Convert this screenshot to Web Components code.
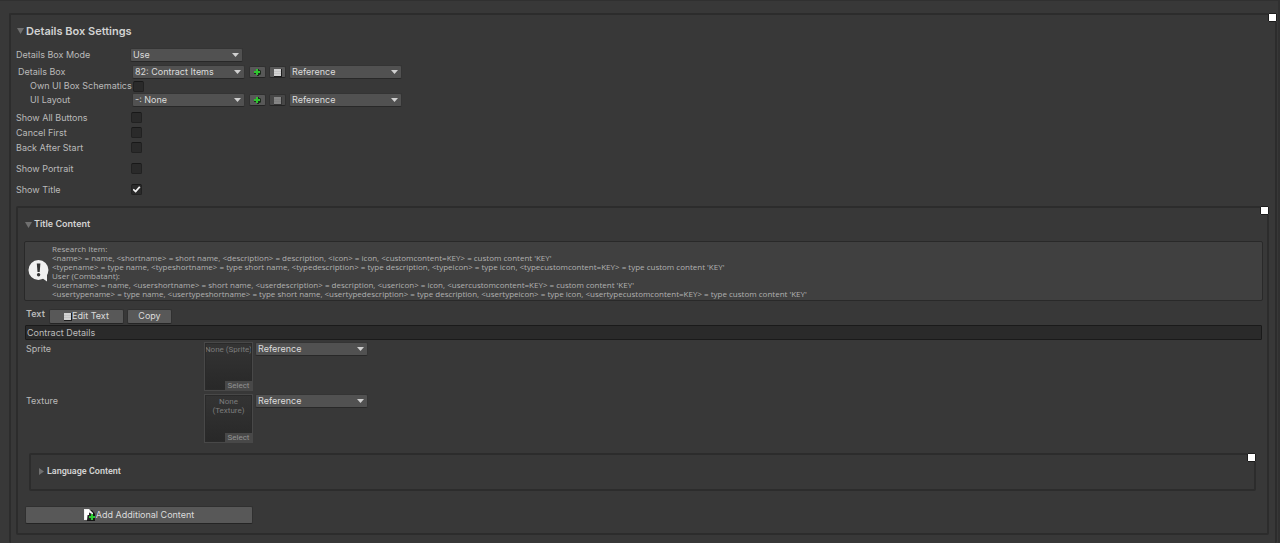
<!DOCTYPE html>
<html lang="en">
<head>
<meta charset="utf-8">
<title>Details Box Settings</title>
<style>
  html { background: #383838; }
  body { margin: 0; font: 9px/14px Inter, "Liberation Sans", sans-serif; color: #bababa; --compact: Roboto, sans-serif; --help: "Open Sans", "Noto Sans", sans-serif; }
</style>
</head>
<body>
<settings-page>
  <fold-panel heading="Details Box Settings" size="large" open>
    <settings-group>
      <select-row label="Details Box Mode" value="Use"></select-row>
    </settings-group>
    <settings-group nested>
      <select-row label="Details Box" value="82: Contract Items" asset></select-row>
      <toggle-row label="Own UI Box Schematics" indent></toggle-row>
      <select-row label="UI Layout" value="-: None" asset indent empty></select-row>
    </settings-group>
    <settings-group>
      <toggle-row label="Show All Buttons"></toggle-row>
      <toggle-row label="Cancel First"></toggle-row>
      <toggle-row label="Back After Start"></toggle-row>
    </settings-group>
    <settings-group spaced><toggle-row label="Show Portrait"></toggle-row></settings-group>
    <settings-group spaced><toggle-row label="Show Title" checked></toggle-row></settings-group>
    <fold-panel class="title" heading="Title Content" size="medium" open>
      <help-box>
        <div>Research Item:</div>
        <div>&lt;name&gt; = name, &lt;shortname&gt; = short name, &lt;description&gt; = description, &lt;icon&gt; = icon, &lt;customcontent=KEY&gt; = custom content 'KEY'</div>
        <div>&lt;typename&gt; = type name, &lt;typeshortname&gt; = type short name, &lt;typedescription&gt; = type description, &lt;typeicon&gt; = type icon, &lt;typecustomcontent=KEY&gt; = type custom content 'KEY'</div>
        <div>User (Combatant):</div>
        <div>&lt;username&gt; = name, &lt;usershortname&gt; = short name, &lt;userdescription&gt; = description, &lt;usericon&gt; = icon, &lt;usercustomcontent=KEY&gt; = custom content 'KEY'</div>
        <div>&lt;usertypename&gt; = type name, &lt;usertypeshortname&gt; = type short name, &lt;usertypedescription&gt; = type description, &lt;usertypeicon&gt; = type icon, &lt;usertypecustomcontent=KEY&gt; = type custom content 'KEY'</div>
      </help-box>
      <text-field label="Text" value="Contract Details"></text-field>
      <object-field label="Sprite" empty="None (Sprite)"></object-field>
      <object-field label="Texture" empty="None (Texture)"></object-field>
      <fold-panel class="language" heading="Language Content" size="small"></fold-panel>
      <add-button>Add Additional Content</add-button>
    </fold-panel>
  </fold-panel>
</settings-page>

<script>
const base = `
  *, *::before, *::after { box-sizing: border-box; }
  button, input, select { font: inherit; color: inherit; margin: 0; }
  button {
    display: flex; align-items: center; justify-content: center; padding: 0;
    background: #585858; border: 1px solid #303030; border-bottom-color: #242424; border-radius: 2px;
    color: #dcdcdc; white-space: nowrap;
  }
  svg { display: block; flex: none; }
`;

const selectCss = `
  .select { position: relative; width: 113px; height: 14px; flex: none; }
  .select select {
    appearance: none; display: block; width: 100%; height: 100%; padding: 0 14px 0 2px;
    background: #515151; border: 1px solid #343434; border-bottom-color: #282828; border-radius: 2px;
    color: #dcdcdc; line-height: 12px;
  }
  .select svg { position: absolute; right: 4px; top: 5px; pointer-events: none; }
`;
const selectHtml = (id, name, value) => `
  <div class="select">
    <select id="${id}" aria-label="${name}"><option>${value}</option></select>
    <svg width="7" height="4" viewBox="0 0 7 4"><path d="M0 0h7L3.5 4z" fill="#d0d0d0"/></svg>
  </div>`;

const checkCss = `
  input[type=checkbox] {
    appearance: none; width: 11px; height: 11px; flex: none; border-radius: 2px;
    background: #2a2a2a; border: 1px solid #212121; border-top-color: #181818;
    display: grid; place-items: center;
  }
  input:checked::before {
    content: ""; width: 8px; height: 7px; background: #f2f2f2;
    clip-path: polygon(0 55%, 16% 38%, 38% 62%, 82% 4%, 100% 18%, 40% 96%);
  }
`;

const stackIcon = `<svg width="8" height="9" viewBox="0 0 8 9"><path d="M0 1h8v8H0z" fill="#1c1c1c"/><path d="M0 1h7v7H0z" fill="#d2d2d2"/><path d="M0 3.500h7M0 5.500h7" stroke="#c4c4c4"/></svg>`;
const plusIcon = `<svg width="9" height="9" viewBox="0 0 9 9"><path d="M3 1h3v1h1l1 1v3L7 7H6v1H4V7H3V6H1V3h2z" fill="#1e2a1e"/><path d="M3 1h2v2h2v2H5v2H3V5H1V3h2z" fill="#2fc32f"/></svg>`;

class Base extends HTMLElement {
  connectedCallback() {
    if (this.shadowRoot) return;
    this.attachShadow({ mode: "open" }).innerHTML = `<style>${base}${this.css()}</style>${this.html()}`;
  }
  attr(name) { return this.getAttribute(name) ?? ""; }
}

customElements.define("settings-page", class extends Base {
  css() { return `
    :host { display: flex; flex-direction: column; min-height: 100vh; box-sizing: border-box;
      padding: 12px 3px 0 9px; border-top: 1px solid #303030; overflow: hidden;
      background: linear-gradient(#303030, #303030) right / 2px 100% no-repeat; }
    ::slotted(*) { flex: 1; }`; }
  html() { return `<slot></slot>`; }
});

customElements.define("fold-panel", class extends Base {
  css() { return `
    :host { display: block; position: relative; box-sizing: border-box; border: 2px solid #2c2c2c; border-radius: 2px; }
    :host([size=large]) { border-bottom: 0; padding: 0 6px 8px 5px; }
    :host([size=medium]) { margin-top: 9px; padding: 0 4px 9px 6px; }
    :host([size=small]) { margin: 9px 7px 0 5px; padding: 0 8px; }
    .head { background: none; border: 0; font-weight: 600; gap: 2px; color: #d2d2d2; }
    .head svg { margin-left: 1px; }
    :host([size=large]) .head { height: 31px; margin-bottom: 2px; font-size: 11px; }
    :host([size=medium]) .head { height: 32px; margin-bottom: 1px; }
    :host([size=small]) .head { height: 32px; margin-bottom: 2px; margin-left: -2px; font-family: var(--compact); }
    .corner { position: absolute; top: -2px; right: -2px; width: 9px; height: 9px; background: #fff; border: 1px solid #1c1c1c; border-radius: 1px; }`; }
  html() {
    const open = this.hasAttribute("open");
    const d = open ? "M0 1h7L3.500 7z" : "M1 0v7l5-3.500z";
    return `<button class="head" aria-expanded="${open}"><svg width="7" height="7" viewBox="0 0 7 7"><path d="${d}" fill="#707070"/></svg>${this.attr("heading")}</button>
      <button class="corner" aria-label="${this.attr("heading")} options"></button><slot></slot>`;
  }
});

customElements.define("settings-group", class extends Base {
  css() { return `
    :host { display: block; }
    :host([nested]) { margin: 3px 0; padding-left: 2px; }
    :host([spaced]) { margin-top: 6px; }`; }
  html() { return `<slot></slot>`; }
});

customElements.define("select-row", class extends Base {
  css() { return selectCss + `
    :host { display: flex; align-items: center; height: 14px; }
    label { width: 114px; flex: none; white-space: nowrap; }
    :host([indent]) label { padding-left: 12px; }
    .asset { display: flex; align-items: center; gap: 3px; margin: 0 3px 0 4px; }
    .asset button { width: 17px; height: 12px; }
    .asset button:disabled { background: #474747; }
    .asset button:disabled svg { opacity: .45; }`; }
  html() {
    const extra = this.hasAttribute("asset") ? `<div class="asset">
      <button aria-label="Add">${plusIcon}</button>
      <button aria-label="Edit" ${this.hasAttribute("empty") ? "disabled" : ""}>${stackIcon}</button></div>
      ${selectHtml("kind", "Source", "Reference")}` : "";
    return `<label for="value">${this.attr("label")}</label>${selectHtml("value", this.attr("label"), this.attr("value"))}${extra}`;
  }
});

customElements.define("toggle-row", class extends Base {
  css() { return checkCss + `
    :host { display: flex; align-items: center; height: 15px; }
    label { width: 115px; flex: none; white-space: nowrap; }
    :host([indent]) { height: 14px; }
    :host([indent]) label { padding-left: 12px; }`; }
  html() { return `<label for="value">${this.attr("label")}</label><input id="value" type="checkbox" ${this.hasAttribute("checked") ? "checked" : ""}>`; }
});

customElements.define("help-box", class extends Base {
  css() { return `
    :host { display: flex; align-items: center; gap: 3px; height: 60px; box-sizing: border-box; padding: 0 3px;
      background: #404040; border: 1px solid #292929; border-radius: 2px;
      font-family: var(--help); font-size: 8px; line-height: 9px; color: #b0b0b0; white-space: nowrap; overflow: hidden; }`; }
  html() { return `<svg width="21" height="22" viewBox="0 0 21 22"><path d="M10.500 0a10 10 0 1 1-.1 20 10 10 0 0 1 .1-20zM14 18l5-3v6.500z" fill="#f0f0f0"/><path d="M8.800 3.500h3.600l-.7 8.500H9.500z" fill="#333"/><circle cx="10.600" cy="14.800" r="1.700" fill="#333"/></svg><div><slot></slot></div>`; }
});

customElements.define("text-field", class extends Base {
  css() { return `
    :host { display: block; margin: 7px 1px 0; }
    .bar { display: flex; align-items: center; height: 16px; padding-left: 1px; gap: 3px; }
    label { font-weight: 600; width: 20px; line-height: 12px; align-self: flex-start; }
    .bar button { height: 15px; width: 75px; }
    .bar .copy { width: 45px; }
    input { display: block; width: 100%; height: 15px; margin-top: 1px; padding: 0 1px 1px; background: #2a2a2a;
      border: 1px solid #1a1a1a; border-radius: 1px; color: #bcbcbc; outline: 0; }`; }
  html() { return `<div class="bar"><label for="value">${this.attr("label")}</label>
    <button>${stackIcon}Edit Text</button><button class="copy">Copy</button></div>
    <input id="value" type="text" value="${this.attr("value")}">`; }
});

customElements.define("object-field", class extends Base {
  css() { return selectCss + `
    :host { display: flex; align-items: flex-start; margin: 2px 2px 0; height: 50px; }
    label { width: 178px; flex: none; }
    .well { position: relative; width: 49px; height: 49px; margin-right: 2px; flex: none;
      background: linear-gradient(#343434, #282828); border: 1px solid #484848; outline: 1px solid #2a2a2a; outline-offset: -2px;
      font-family: var(--compact); font-size: 8px; line-height: 9px; color: #7c7c7c; text-align: center; }
    .name { margin: 2px -1px 0; }
    .well button { position: absolute; right: 0; bottom: 0; width: 27px; height: 9px; border: 0; border-radius: 0; background: #484848; color: #929292; }`; }
  html() {
    const text = this.attr("empty");
    return `<label for="kind">${this.attr("label")}</label>
      <div class="well"><div class="name">${text}</div><button>Select</button></div>
      ${selectHtml("kind", this.attr("label"), "Reference")}`;
  }
});

customElements.define("add-button", class extends Base {
  css() { return `
    :host { display: block; margin: 15px 1px 0; }
    button { width: 228px; height: 18px; }`; }
  html() { return `<button><svg width="12" height="12" viewBox="0 0 12 12"><path d="M2 1h6l3 4v7H3z" fill="#151515"/><path d="M0 0h5l4 4v7H0z" fill="#f2f2f2"/><path d="M4 3l4 2v6H3z" fill="#222"/><path d="M1 1h4v5H3v4H1z" fill="#fff"/><path d="M7 5h2v2h2v2H9v2H7V9H5V7h2z" fill="#2bcc33"/></svg><slot></slot></button>`; }
});
</script>
</body>
</html>
